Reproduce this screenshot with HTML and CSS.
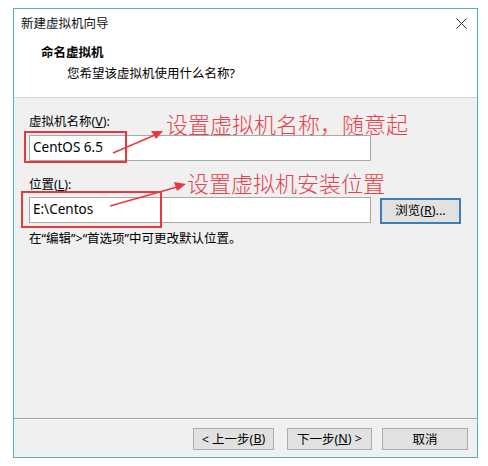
FILE: index.html
```html
<!DOCTYPE html>
<html lang="zh-CN">
<head>
<meta charset="utf-8">
<title>新建虚拟机向导</title>
<link rel="stylesheet" href="styles.css">
</head>
<body>
<div class="dialog">
  <div class="titlebar">
    <span class="title">新建虚拟机向导</span>
    <svg class="close" width="11" height="11" viewBox="0 0 11 11"><path d="M0.5 0.5 L10.5 10.5 M10.5 0.5 L0.5 10.5" stroke="#333" stroke-width="1" fill="none"/></svg>
  </div>
  <div class="header">
    <div class="h-title">命名虚拟机</div>
    <div class="h-sub">您希望该虚拟机使用什么名称?</div>
  </div>
  <div class="body">
    <div class="label">虚拟机名称(<u>V</u>):</div>
    <div class="input">CentOS 6.5</div>
    <div class="label label2">位置(<u>L</u>):</div>
    <div class="row">
      <div class="input">E:\Centos</div>
      <div class="btn browse">浏览(<u>R</u>)...</div>
    </div>
    <div class="hint">在“编辑”&gt;“首选项”中可更改默认位置。</div>
  </div>
  <div class="footer">
    <div class="btn fbtn b1">&lt; 上一步(<u>B</u>)</div>
    <div class="btn fbtn b2">下一步(<u>N</u>) &gt;</div>
    <div class="btn fbtn b3">取消</div>
  </div>
</div>

<svg class="annot" width="488" height="466" viewBox="0 0 488 466">
  <g stroke="#e6393f" fill="none" stroke-width="2">
    <rect x="25" y="132" width="101" height="30"/>
    <rect x="22" y="192" width="139" height="35"/>
  </g>
  <g stroke="#e6393f" stroke-width="1.5" fill="#e6393f">
    <line x1="113" y1="153" x2="155" y2="135"/>
    <polygon points="163,131 151,131 156,139" stroke="none"/>
    <line x1="110" y1="206" x2="177" y2="187"/>
    <polygon points="186,184 174,182 177,191" stroke="none"/>
  </g>
</svg>
<div class="note note1">设置虚拟机名称，随意起</div>
<div class="note note2">设置虚拟机安装位置</div>
</body>
</html>
```

FILE: styles.css
```css
html, body {
  margin: 0;
  padding: 0;
  background: #ffffff;
}
body {
  width: 488px;
  height: 466px;
  position: relative;
  overflow: hidden;
  font-family: "Noto Sans", "Noto Sans CJK SC", sans-serif;
  font-size: 12.5px;
  color: #000;
}
.dialog {
  margin-left: 13px;
  margin-top: 8px;
  width: 463px;
  height: 448px;
  border: 1px solid #4cb5b6;
  background: #f0f0f0;
  display: flex;
  flex-direction: column;
}
.titlebar {
  height: 30px;
  background: #fff;
  display: flex;
  align-items: center;
  justify-content: space-between;
  padding: 0 10px 0 7px;
  line-height: 16px;
}
.title {
  color: #111;
}
.close {
  display: block;
  margin-top: -1px;
}
.header {
  background: #fff;
  border-bottom: 1px solid #d3d3d3;
  padding-top: 6px;
  box-sizing: border-box;
  height: 59px;
  line-height: 16px;
}
.h-title {
  font-weight: bold;
  padding-left: 27px;
}
.h-sub {
  margin-top: 5px;
  padding-left: 53px;
}
.body {
  flex: 1;
  padding: 16px 0 0 15px;
  line-height: 16px;
}
.label {
  height: 16px;
}
.label2 {
  margin-top: 16px;
}
.input {
  margin-top: 5px;
  width: 342px;
  height: 26px;
  box-sizing: border-box;
  border: 1px solid #a9a9a9;
  background: #fff;
  padding-left: 3px;
  line-height: 23px;
  font-size: 13.5px;
}
.row {
  display: flex;
  align-items: flex-start;
  gap: 9px;
  margin-top: 4px;
}
.row .input {
  margin-top: 0;
}
.btn {
  box-sizing: border-box;
  background: #e1e1e1;
  border: 1px solid #adadad;
  display: flex;
  align-items: center;
  justify-content: center;
}
.browse {
  width: 81px;
  height: 26px;
  margin-top: 1px;
  border: 2px solid #3f7db5;
}
.hint {
  margin-top: 7px;
}
.footer {
  border-top: 1px solid #a0a0a0;
  box-shadow: inset 0 1px 0 #ffffff;
  display: flex;
  align-items: center;
  justify-content: flex-end;
  padding-right: 9px;
  padding-top: 1px;
  height: 37px;
}
.fbtn {
  height: 22px;
}
.b1 { width: 81px; }
.b2 { width: 85px; margin-left: 13px; }
.b3 { width: 86px; margin-left: 10px; }
.annot {
  position: absolute;
  left: 0;
  top: 0;
}
.note {
  position: absolute;
  color: #e4424d;
  font-family: "Noto Sans CJK SC", sans-serif;
  font-weight: 300;
  font-size: 22px;
  line-height: 26px;
  white-space: nowrap;
}
.note1 {
  left: 166px;
  top: 110px;
}
.note2 {
  left: 187px;
  top: 169px;
}
```
